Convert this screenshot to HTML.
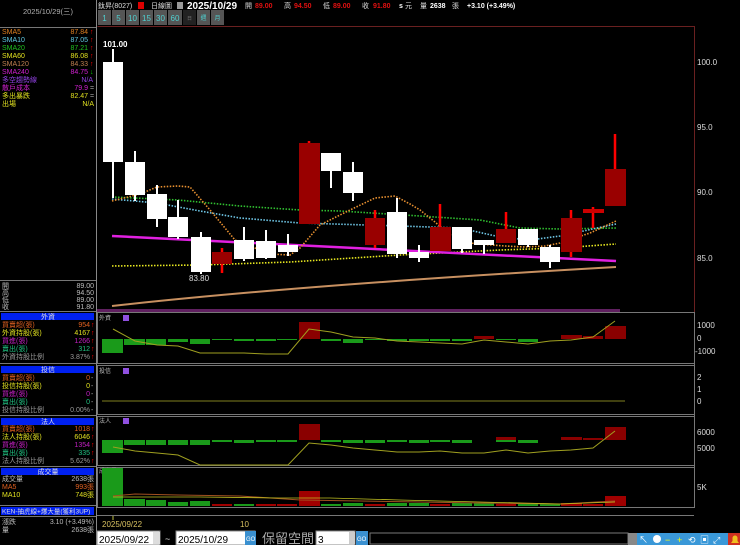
<!DOCTYPE html>
<html><head><meta charset="utf-8"><style>
html,body{margin:0;padding:0;background:#000;width:740px;height:545px;overflow:hidden}
svg{display:block}
text{font-family:"Liberation Sans","Noto Sans CJK TC",sans-serif}
.m{font-family:"Liberation Mono","Noto Sans CJK TC",monospace}
</style></head><body>
<svg width="740" height="545" viewBox="0 0 740 545" xmlns="http://www.w3.org/2000/svg">
<rect width="740" height="545" fill="#000"/>
<!-- left panel -->
<g font-size="7" class="m">
<text x="48" y="14" fill="#b0b0b0" text-anchor="middle" font-size="7.5">2025/10/29(三)</text>
<line x1="0" y1="27.5" x2="96" y2="27.5" stroke="#777"/>
<text x="2" y="34" fill="#e08020">SMA5</text><text x="88" y="34" fill="#e08020" text-anchor="end">87.84</text><text x="90" y="34" fill="#f00">↑</text>
<text x="2" y="42" fill="#60c8e0">SMA10</text><text x="88" y="42" fill="#60c8e0" text-anchor="end">87.05</text><text x="90" y="42" fill="#f00">↑</text>
<text x="2" y="50" fill="#20c020">SMA20</text><text x="88" y="50" fill="#20c020" text-anchor="end">87.21</text><text x="90" y="50" fill="#f00">↑</text>
<text x="2" y="58" fill="#e0e020">SMA60</text><text x="88" y="58" fill="#e0e020" text-anchor="end">86.08</text><text x="90" y="58" fill="#f00">↑</text>
<text x="2" y="66" fill="#c08050">SMA120</text><text x="88" y="66" fill="#c08050" text-anchor="end">84.33</text><text x="90" y="66" fill="#f00">↑</text>
<text x="2" y="74" fill="#d020d0">SMA240</text><text x="88" y="74" fill="#d020d0" text-anchor="end">84.75</text><text x="90" y="74" fill="#0c0">↓</text>
<text x="2" y="82" fill="#9040e0">多空趨勢線</text><text x="93" y="82" fill="#9040e0" text-anchor="end">N/A</text>
<text x="2" y="90" fill="#d020d0">散戶成本</text><text x="88" y="90" fill="#d020d0" text-anchor="end">79.9</text><text x="90" y="90" fill="#aaa">=</text>
<text x="2" y="98" fill="#e0e020">多出暴跌</text><text x="88" y="98" fill="#e0e020" text-anchor="end">82.47</text><text x="90" y="98" fill="#aaa">=</text>
<text x="2" y="106" fill="#e0e020">出場</text><text x="94" y="106" fill="#e0e020" text-anchor="end">N/A</text>
<line x1="0" y1="280.5" x2="96" y2="280.5" stroke="#777"/>
<text x="2" y="288" fill="#bbb">開</text><text x="94" y="288" fill="#bbb" text-anchor="end">89.00</text>
<text x="2" y="295" fill="#bbb">高</text><text x="94" y="295" fill="#bbb" text-anchor="end">94.50</text>
<text x="2" y="302" fill="#bbb">低</text><text x="94" y="302" fill="#bbb" text-anchor="end">89.00</text>
<text x="2" y="309" fill="#bbb">收</text><text x="94" y="309" fill="#bbb" text-anchor="end">91.80</text>
<line x1="0" y1="311.5" x2="96" y2="311.5" stroke="#777"/>
<rect x="1" y="313" width="93" height="7" fill="#0020f0"/><text x="48" y="319" fill="#ddd" text-anchor="middle">外資</text>
<text x="2" y="327" fill="#e06020">買賣超(張)</text><text x="90" y="327" fill="#e06020" text-anchor="end">954</text><text x="91" y="327" fill="#f00">↑</text>
<text x="2" y="335" fill="#e0e020">外資持股(張)</text><text x="90" y="335" fill="#e0e020" text-anchor="end">4167</text><text x="91" y="335" fill="#f00">↑</text>
<text x="2" y="343" fill="#c020c0">買進(張)</text><text x="90" y="343" fill="#c020c0" text-anchor="end">1266</text><text x="91" y="343" fill="#f00">↑</text>
<text x="2" y="351" fill="#20c080">賣出(張)</text><text x="90" y="351" fill="#20c080" text-anchor="end">312</text><text x="91" y="351" fill="#f00">↑</text>
<text x="2" y="359" fill="#999">外資持股比例</text><text x="90" y="359" fill="#999" text-anchor="end">3.87%</text><text x="91" y="359" fill="#f00">↑</text>
<line x1="0" y1="363.5" x2="96" y2="363.5" stroke="#777"/>
<rect x="1" y="366" width="93" height="7" fill="#0020f0"/><text x="48" y="372" fill="#ddd" text-anchor="middle">投信</text>
<text x="2" y="380" fill="#e06020">買賣超(張)</text><text x="90" y="380" fill="#e06020" text-anchor="end">0</text><text x="91" y="380" fill="#aaa">-</text>
<text x="2" y="388" fill="#e0e020">投信持股(張)</text><text x="90" y="388" fill="#e0e020" text-anchor="end">0</text><text x="91" y="388" fill="#aaa">-</text>
<text x="2" y="396" fill="#c020c0">買進(張)</text><text x="90" y="396" fill="#c020c0" text-anchor="end">0</text><text x="91" y="396" fill="#aaa">-</text>
<text x="2" y="404" fill="#20c080">賣出(張)</text><text x="90" y="404" fill="#20c080" text-anchor="end">0</text><text x="91" y="404" fill="#aaa">-</text>
<text x="2" y="412" fill="#999">投信持股比例</text><text x="90" y="412" fill="#999" text-anchor="end">0.00%</text><text x="91" y="412" fill="#aaa">-</text>
<line x1="0" y1="415.5" x2="96" y2="415.5" stroke="#777"/>
<rect x="1" y="418" width="93" height="7" fill="#0020f0"/><text x="48" y="424" fill="#ddd" text-anchor="middle">法人</text>
<text x="2" y="431" fill="#e06020">買賣超(張)</text><text x="90" y="431" fill="#e06020" text-anchor="end">1018</text><text x="91" y="431" fill="#f00">↑</text>
<text x="2" y="439" fill="#e0e020">法人持股(張)</text><text x="90" y="439" fill="#e0e020" text-anchor="end">6046</text><text x="91" y="439" fill="#f00">↑</text>
<text x="2" y="447" fill="#c020c0">買進(張)</text><text x="90" y="447" fill="#c020c0" text-anchor="end">1354</text><text x="91" y="447" fill="#f00">↑</text>
<text x="2" y="455" fill="#20c080">賣出(張)</text><text x="90" y="455" fill="#20c080" text-anchor="end">335</text><text x="91" y="455" fill="#f00">↑</text>
<text x="2" y="463" fill="#999">法人持股比例</text><text x="90" y="463" fill="#999" text-anchor="end">5.62%</text><text x="91" y="463" fill="#f00">↑</text>
<line x1="0" y1="466.5" x2="96" y2="466.5" stroke="#777"/>
<rect x="1" y="468" width="93" height="7" fill="#0020f0"/><text x="48" y="474" fill="#ddd" text-anchor="middle">成交量</text>
<text x="2" y="481" fill="#bbb">成交量</text><text x="94" y="481" fill="#bbb" text-anchor="end">2638張</text>
<text x="2" y="489" fill="#e06020">MA5</text><text x="94" y="489" fill="#e06020" text-anchor="end">993張</text>
<text x="2" y="497" fill="#e0e020">MA10</text><text x="94" y="497" fill="#e0e020" text-anchor="end">748張</text>
<line x1="0" y1="505.5" x2="96" y2="505.5" stroke="#777"/>
<rect x="1" y="507" width="93" height="8" fill="#0020f0"/><text x="2" y="513.5" fill="#ddd" font-size="6.5">KEN-抽虎線+爆大量(獲利3UP)</text>
<line x1="0" y1="516.5" x2="96" y2="516.5" stroke="#777"/>
<text x="2" y="524" fill="#bbb">漲跌</text><text x="94" y="524" fill="#bbb" text-anchor="end">3.10 (+3.49%)</text>
<text x="2" y="532" fill="#bbb">量</text><text x="94" y="532" fill="#bbb" text-anchor="end">2638張</text>
</g>
<line x1="96.5" y1="0" x2="96.5" y2="545" stroke="#888"/>
<!-- top bar -->
<g font-size="7" class="m">
<text x="98" y="8" fill="#ddd">鈦昇(8027)</text>
<rect x="138" y="2" width="6" height="7" fill="#d00"/>
<text x="151" y="8" fill="#ddd">日線圖</text>
<rect x="177" y="2" width="6" height="7" fill="#999"/>
<text x="187" y="9" fill="#fff" font-size="10" font-weight="bold">2025/10/29</text>
<text x="245" y="8" fill="#ddd">開</text><text x="255" y="8" fill="#e01010" font-weight="bold">89.00</text>
<text x="284" y="8" fill="#ddd">高</text><text x="294" y="8" fill="#e01010" font-weight="bold">94.50</text>
<text x="323" y="8" fill="#ddd">低</text><text x="333" y="8" fill="#e01010" font-weight="bold">89.00</text>
<text x="362" y="8" fill="#ddd">收</text><text x="373" y="8" fill="#e01010" font-weight="bold">91.80</text>
<text x="399" y="8" fill="#fff" font-weight="bold">s</text><text x="405" y="8" fill="#ddd">元</text>
<text x="420" y="8" fill="#ddd">量</text><text x="430" y="8" fill="#fff" font-weight="bold">2638</text><text x="452" y="8" fill="#ddd">張</text>
<text x="467" y="8" fill="#fff" font-weight="bold">+3.10 (+3.49%)</text>
</g>
<g font-size="8" fill="#50d0d0" text-anchor="middle">
<rect x="98" y="10" width="13" height="15" fill="#555"/><text x="104.5" y="21">1</text>
<rect x="112" y="10" width="13" height="15" fill="#555"/><text x="118.5" y="21">5</text>
<rect x="126" y="10" width="13" height="15" fill="#555"/><text x="132.5" y="21">10</text>
<rect x="140" y="10" width="13" height="15" fill="#555"/><text x="146.5" y="21">15</text>
<rect x="154" y="10" width="13" height="15" fill="#555"/><text x="160.5" y="21">30</text>
<rect x="168" y="10" width="14" height="15" fill="#555"/><text x="175" y="21">60</text>
<rect x="183" y="10" width="13" height="15" fill="#222"/><text x="189.5" y="20" fill="#777" font-size="5">日</text>
<rect x="197" y="10" width="13" height="15" fill="#555"/><text x="203.5" y="20" font-size="6">週</text>
<rect x="211" y="10" width="13" height="15" fill="#555"/><text x="217.5" y="20" font-size="6">月</text>
</g>
<!-- main chart frame -->
<path d="M97.5 26.5 H694.5 V312" fill="none" stroke="#6a2020"/>
<line x1="694.5" y1="312" x2="694.5" y2="508" stroke="#777"/>
<!-- right axis -->
<g font-size="8" fill="#ddd" class="m">
<text x="697" y="65">100.0</text><text x="697" y="130">95.0</text><text x="697" y="195">90.0</text><text x="697" y="261">85.0</text>
<text x="697" y="328">1000</text><text x="697" y="341">0</text><text x="695" y="354">-1000</text>
<text x="697" y="380">2</text><text x="697" y="392">1</text><text x="697" y="404">0</text>
<text x="697" y="435">6000</text><text x="697" y="451">5000</text>
<text x="697" y="490">5K</text>
</g>
<!-- MA lines -->
<path d="M112 306 Q 300 285 616 267" fill="none" stroke="#c89060" stroke-width="2"/>
<polyline points="112,266 200,265 290,262 400,255 500,250 560,248 616,244" fill="none" stroke="#e8e820" stroke-width="1.6" stroke-dasharray="1.5 1.5"/>
<polyline points="112,197 178,200 240,206 300,210 340,211 420,216 480,220 520,228 560,229 616,228" fill="none" stroke="#30c030" stroke-width="1.6" stroke-dasharray="1.5 1.5"/>
<polyline points="112,199 157,203 200,211 240,218 300,223 400,226 460,228 500,237 530,240 560,236 616,224" fill="none" stroke="#70c8e8" stroke-width="1.6" stroke-dasharray="1.5 1.5"/>
<line x1="112" y1="236" x2="616" y2="261" stroke="#e020e0" stroke-width="2.5"/>
<polyline points="112,201 140,194 157,187 178,186 190,187 210,210 235,240 270,254 290,255 300,248 320,225 350,210 375,198 395,196 410,204 420,210 435,222 450,235 470,243 480,244 505,246 525,247 545,246 560,243 590,233 616,221" fill="none" stroke="#e89030" stroke-width="1.6" stroke-dasharray="1.5 1.5"/>
<!-- candles -->
<g id="c">
<line x1="113" y1="49" x2="113" y2="198" stroke="#fff" stroke-width="2"/><rect x="103" y="62" width="20" height="100" fill="#fff"/>
<line x1="135" y1="151" x2="135" y2="201" stroke="#fff" stroke-width="2"/><rect x="125" y="162" width="20" height="33" fill="#fff"/>
<line x1="157" y1="185" x2="157" y2="227" stroke="#fff" stroke-width="2"/><rect x="147" y="194" width="20" height="25" fill="#fff"/>
<line x1="178" y1="200" x2="178" y2="239" stroke="#fff" stroke-width="2"/><rect x="168" y="217" width="20" height="20" fill="#fff"/>
<line x1="201" y1="232" x2="201" y2="274" stroke="#fff" stroke-width="2"/><rect x="191" y="237" width="20" height="35" fill="#fff"/>
<line x1="222" y1="248" x2="222" y2="273" stroke="#f00" stroke-width="2.5"/><rect x="212" y="252" width="20" height="12" fill="#900"/>
<line x1="244" y1="227" x2="244" y2="261" stroke="#fff" stroke-width="2"/><rect x="234" y="240" width="20" height="19" fill="#fff"/>
<line x1="266" y1="230" x2="266" y2="259" stroke="#fff" stroke-width="2"/><rect x="256" y="241" width="20" height="17" fill="#fff"/>
<line x1="288" y1="234" x2="288" y2="256" stroke="#fff" stroke-width="2"/><rect x="278" y="245" width="20" height="7" fill="#fff"/>
<line x1="309" y1="141" x2="309" y2="224" stroke="#f00" stroke-width="2.5"/><rect x="299" y="143" width="21" height="81" fill="#900"/>
<line x1="331" y1="153" x2="331" y2="188" stroke="#fff" stroke-width="2"/><rect x="321" y="153" width="20" height="18" fill="#fff"/>
<line x1="353" y1="162" x2="353" y2="201" stroke="#fff" stroke-width="2"/><rect x="343" y="172" width="20" height="21" fill="#fff"/>
<line x1="375" y1="210" x2="375" y2="248" stroke="#f00" stroke-width="2.5"/><rect x="365" y="218" width="20" height="27" fill="#900"/>
<line x1="397" y1="198" x2="397" y2="258" stroke="#fff" stroke-width="2"/><rect x="387" y="212" width="20" height="42" fill="#fff"/>
<line x1="419" y1="245" x2="419" y2="262" stroke="#fff" stroke-width="2"/><rect x="409" y="252" width="20" height="6" fill="#fff"/>
<line x1="440" y1="204" x2="440" y2="251" stroke="#f00" stroke-width="2.5"/><rect x="430" y="227" width="21" height="24" fill="#900"/>
<line x1="462" y1="227" x2="462" y2="253" stroke="#fff" stroke-width="2"/><rect x="452" y="227" width="20" height="22" fill="#fff"/>
<line x1="484" y1="240" x2="484" y2="254" stroke="#fff" stroke-width="2"/><rect x="474" y="240" width="20" height="5" fill="#fff"/>
<line x1="506" y1="212" x2="506" y2="243" stroke="#f00" stroke-width="2.5"/><rect x="496" y="229" width="20" height="14" fill="#900"/>
<line x1="528" y1="229" x2="528" y2="247" stroke="#fff" stroke-width="2"/><rect x="518" y="229" width="20" height="16" fill="#fff"/>
<line x1="550" y1="245" x2="550" y2="268" stroke="#fff" stroke-width="2"/><rect x="540" y="247" width="20" height="15" fill="#fff"/>
<line x1="571" y1="210" x2="571" y2="257" stroke="#f00" stroke-width="2.5"/><rect x="561" y="218" width="21" height="34" fill="#900"/>
<line x1="593" y1="207" x2="593" y2="228" stroke="#f00" stroke-width="2.5"/><rect x="583" y="209" width="21" height="4" fill="#c00"/>
<line x1="615" y1="134" x2="615" y2="169" stroke="#f00" stroke-width="2.5"/><rect x="605" y="169" width="21" height="37" fill="#900"/>
</g>
<text x="103" y="47" fill="#fff" font-size="8" font-weight="bold">101.00</text>
<text x="189" y="281" fill="#ddd" font-size="8">83.80</text>
<!-- sub panels frames -->
<g stroke="#777" fill="none">
<rect x="97.5" y="312.5" width="597" height="51"/>
<rect x="97.5" y="365.5" width="597" height="49"/>
<rect x="97.5" y="416.5" width="597" height="49"/>
<rect x="97.5" y="467.5" width="597" height="40"/>
<line x1="97" y1="515.5" x2="694" y2="515.5"/>
</g>
<rect x="97" y="309" width="523" height="3" fill="#602060"/>
<g font-size="6" fill="#bbb"><text x="99" y="320">外資</text><text x="99" y="373">投信</text><text x="99" y="423">法人</text><text x="99" y="473">成交量</text></g>
<g fill="#9050e0"><rect x="123" y="315" width="6" height="6"/><rect x="123" y="368" width="6" height="6"/><rect x="123" y="418" width="6" height="6"/></g>
<!-- 外資 bars -->
<g fill="#1a9a1a">
<rect x="102" y="339" width="21" height="14"/><rect x="124" y="339" width="21" height="6"/><rect x="146" y="339" width="20" height="6"/><rect x="168" y="339" width="20" height="3"/><rect x="190" y="339" width="20" height="5"/><rect x="212" y="339" width="20" height="1"/><rect x="234" y="339" width="20" height="2"/><rect x="256" y="339" width="20" height="2"/><rect x="277" y="339" width="20" height="1"/>
<rect x="321" y="339" width="20" height="2"/><rect x="343" y="339" width="20" height="4"/><rect x="365" y="339" width="20" height="1"/><rect x="387" y="339" width="20" height="2"/><rect x="409" y="339" width="20" height="2"/><rect x="430" y="339" width="20" height="2"/><rect x="452" y="339" width="20" height="2"/><rect x="496" y="339" width="20" height="1"/><rect x="518" y="339" width="20" height="3"/>
</g>
<g fill="#8a0000"><rect x="299" y="322" width="21" height="17"/><rect x="474" y="336" width="20" height="3"/><rect x="561" y="335" width="21" height="4"/><rect x="583" y="336" width="20" height="3"/><rect x="605" y="326" width="21" height="13"/></g>
<polyline points="113,329 135,341 157,345 178,346 200,353 222,353 244,353 266,354 288,354 309,329 331,332 353,337 375,338 397,341 419,342 440,343 462,344 484,340 506,342 528,344 550,341 571,340 593,337 615,321" fill="none" stroke="#a0a020" stroke-width="1"/>
<!-- 投信 line -->
<line x1="102" y1="401" x2="625" y2="401" stroke="#808020"/>
<!-- 法人 bars -->
<g fill="#1a9a1a">
<rect x="102" y="440" width="21" height="13"/><rect x="124" y="440" width="21" height="5"/><rect x="146" y="440" width="20" height="5"/><rect x="168" y="440" width="20" height="5"/><rect x="190" y="440" width="20" height="5"/><rect x="212" y="440" width="20" height="2"/><rect x="234" y="440" width="20" height="3"/><rect x="256" y="440" width="20" height="2"/><rect x="277" y="440" width="20" height="2"/>
<rect x="321" y="440" width="20" height="2"/><rect x="343" y="440" width="20" height="3"/><rect x="365" y="440" width="20" height="3"/><rect x="387" y="440" width="20" height="2"/><rect x="409" y="440" width="20" height="3"/><rect x="430" y="440" width="20" height="2"/><rect x="452" y="440" width="20" height="3"/><rect x="496" y="440" width="20" height="2"/><rect x="518" y="440" width="20" height="3"/>
</g>
<g fill="#8a0000"><rect x="299" y="424" width="21" height="16"/><rect x="496" y="437" width="20" height="3"/><rect x="561" y="437" width="21" height="3"/><rect x="583" y="438" width="20" height="2"/><rect x="605" y="427" width="21" height="13"/></g>
<polyline points="113,447 135,451 157,453 178,455 200,465 222,465 244,465 266,465 288,465 309,443 331,445 353,448 375,450 397,452 419,452 440,451 462,453 484,453 506,450 528,453 550,451 571,450 593,448 615,431" fill="none" stroke="#a0a020" stroke-width="1"/>
<!-- volume bars -->
<g fill="#1a9a1a">
<rect x="102" y="468" width="21" height="38"/><rect x="124" y="499" width="21" height="7"/><rect x="146" y="500" width="20" height="6"/><rect x="168" y="502" width="20" height="4"/><rect x="190" y="501" width="20" height="5"/><rect x="234" y="504" width="20" height="2"/><rect x="321" y="504" width="20" height="2"/><rect x="343" y="503" width="20" height="3"/><rect x="387" y="503" width="20" height="3"/><rect x="409" y="503" width="20" height="3"/><rect x="452" y="503" width="20" height="3"/><rect x="474" y="503" width="20" height="3"/><rect x="518" y="504" width="20" height="2"/><rect x="540" y="504" width="20" height="2"/>
</g>
<g fill="#a00000"><rect x="212" y="504" width="20" height="2"/><rect x="256" y="504" width="20" height="2"/><rect x="277" y="504" width="20" height="2"/><rect x="299" y="491" width="21" height="15"/><rect x="365" y="504" width="20" height="2"/><rect x="430" y="504" width="20" height="2"/><rect x="496" y="504" width="20" height="2"/><rect x="561" y="503" width="21" height="3"/><rect x="583" y="504" width="20" height="2"/><rect x="605" y="496" width="21" height="10"/></g>
<polyline points="113,496 135,494 178,495 240,496 300,500 360,501 420,502 480,503 560,504 615,501" fill="none" stroke="#a05020" stroke-width="1"/>
<polyline points="113,497 200,497 280,498 300,498 330,498 400,500 480,502 560,504 615,502" fill="none" stroke="#c0c020" stroke-width="0.8"/>
<!-- date axis -->
<line x1="113" y1="516" x2="113" y2="520" stroke="#c0c040"/>
<text x="102" y="527" fill="#d8c060" font-size="8">2025/09/22</text>
<text x="240" y="527" fill="#d8c060" font-size="8">10</text>
<!-- bottom controls -->
<rect x="97" y="531" width="63" height="14" fill="#fff" stroke="#888"/><text x="99" y="543" font-size="10" fill="#000">2025/09/22</text>
<rect x="153" y="532" width="7" height="12" fill="#ddd"/>
<text x="165" y="542" font-size="9" fill="#ddd">~</text>
<rect x="176" y="531" width="79" height="14" fill="#fff" stroke="#888"/><text x="178" y="543" font-size="10" fill="#000">2025/10/29</text>
<rect x="247" y="532" width="7" height="12" fill="#ddd"/>
<rect x="245" y="531" width="11" height="14" fill="#3a90d0"/><text x="246" y="541" font-size="6" fill="#fff">GO</text>
<text x="262" y="543" font-size="13" fill="#aaa" font-family="Noto Sans CJK TC, sans-serif">保留空間</text>
<rect x="316" y="531" width="39" height="14" fill="#fff" stroke="#888"/><text x="318" y="543" font-size="10" fill="#000">3</text>
<rect x="349" y="532" width="6" height="12" fill="#ccc"/>
<rect x="356" y="531" width="12" height="14" fill="#3a90d0"/><text x="357" y="541" font-size="6" fill="#fff">GO</text>
<rect x="370" y="533" width="258" height="11" fill="#000" stroke="#777"/>
<rect x="628" y="533" width="9" height="12" fill="#888"/>
<rect x="637" y="533" width="91" height="12" fill="#3a98d8"/>
<rect x="728" y="533" width="12" height="12" fill="#d03020"/>
<g fill="#fff" font-size="9"><text x="639" y="543">↖</text><circle cx="657" cy="539" r="4"/><text x="665" y="543" fill="#ff0">−</text><text x="677" y="543" fill="#ff0">+</text><text x="688" y="543">⟲</text><text x="700" y="543">▣</text><text x="713" y="543">⤢</text></g>
<path d="M731 543 h8 l-1.5 -2 v-3 a2.5 2.5 0 0 0 -5 0 v3 z" fill="#f0c020"/>
</svg>
</body></html>
